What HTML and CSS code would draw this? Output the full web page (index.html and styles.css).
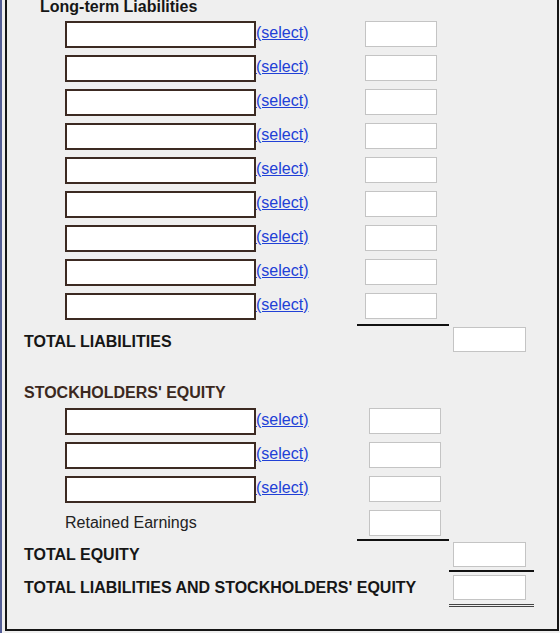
FILE: index.html
```html
<!DOCTYPE html>
<html>
<head>
    <title>Balance Sheet - Liabilities and Equity</title>
    <link rel="stylesheet" href="styles.css">
</head>
<body>
    <div class="sheet">
        <div class="sub-head">Long-term Liabilities</div>

        <div class="line-item">
            <input type="text" class="acct-name">
            <a href="#" class="pick">(select)</a>
            <div class="amt-cell"><input type="text" class="amt"></div>
        </div>
        <div class="line-item">
            <input type="text" class="acct-name">
            <a href="#" class="pick">(select)</a>
            <div class="amt-cell"><input type="text" class="amt"></div>
        </div>
        <div class="line-item">
            <input type="text" class="acct-name">
            <a href="#" class="pick">(select)</a>
            <div class="amt-cell"><input type="text" class="amt"></div>
        </div>
        <div class="line-item">
            <input type="text" class="acct-name">
            <a href="#" class="pick">(select)</a>
            <div class="amt-cell"><input type="text" class="amt"></div>
        </div>
        <div class="line-item">
            <input type="text" class="acct-name">
            <a href="#" class="pick">(select)</a>
            <div class="amt-cell"><input type="text" class="amt"></div>
        </div>
        <div class="line-item">
            <input type="text" class="acct-name">
            <a href="#" class="pick">(select)</a>
            <div class="amt-cell"><input type="text" class="amt"></div>
        </div>
        <div class="line-item">
            <input type="text" class="acct-name">
            <a href="#" class="pick">(select)</a>
            <div class="amt-cell"><input type="text" class="amt"></div>
        </div>
        <div class="line-item">
            <input type="text" class="acct-name">
            <a href="#" class="pick">(select)</a>
            <div class="amt-cell"><input type="text" class="amt"></div>
        </div>
        <div class="line-item closing">
            <input type="text" class="acct-name">
            <a href="#" class="pick">(select)</a>
            <div class="amt-cell"><input type="text" class="amt"></div>
        </div>

        <div class="total-row first-total">
            <div class="total-label">TOTAL LIABILITIES</div>
            <div class="tot-cell"><input type="text" class="tot"></div>
        </div>

        <div class="section-head">STOCKHOLDERS' EQUITY</div>

        <div class="line-item equity">
            <input type="text" class="acct-name">
            <a href="#" class="pick">(select)</a>
            <div class="amt-cell"><input type="text" class="amt"></div>
        </div>
        <div class="line-item equity">
            <input type="text" class="acct-name">
            <a href="#" class="pick">(select)</a>
            <div class="amt-cell"><input type="text" class="amt"></div>
        </div>
        <div class="line-item equity">
            <input type="text" class="acct-name">
            <a href="#" class="pick">(select)</a>
            <div class="amt-cell"><input type="text" class="amt"></div>
        </div>
        <div class="line-item equity closing retained">
            <div class="fixed-name">Retained Earnings</div>
            <div class="amt-cell"><input type="text" class="amt"></div>
        </div>

        <div class="total-row sub-total">
            <div class="total-label">TOTAL EQUITY</div>
            <div class="tot-cell"><input type="text" class="tot"></div>
        </div>
        <div class="total-row grand-total">
            <div class="total-label">TOTAL LIABILITIES AND STOCKHOLDERS' EQUITY</div>
            <div class="tot-cell"><input type="text" class="tot"></div>
        </div>
    </div>
</body>
</html>
```

FILE: styles.css
```css
body {
    margin: 0;
    background-color: #efefef;
    border-left: 2px solid #555f96;
    font-family: "Liberation Sans", Arial, sans-serif;
    font-size: 16px;
    color: #161616;
    min-height: 633px;
    box-sizing: border-box;
}

.sheet {
    width: 554px;
    margin: -20px 0 0 3px;
    padding: 16px 0 22px 0;
    border: 2px solid #151515;
    box-sizing: border-box;
    background-color: #efefef;
}

/* columns: indent | account name | select link | amounts | totals */
.line-item,
.total-row {
    display: grid;
    grid-template-columns: 58px 191px 101px 92px 85px 1fr;
    align-items: start;
}

.sub-head {
    font-weight: bold;
    line-height: 18px;
    padding-left: 33px;
    margin-bottom: 5px;
}

.section-head {
    font-weight: bold;
    line-height: 18px;
    color: #3b2820;
    padding-left: 17px;
    margin: 32px 0 6px 0;
}

.line-item {
    height: 34px;
}

.line-item.closing {
    height: auto;
}

.acct-name {
    grid-column: 2;
    display: block;
    width: 191px;
    height: 27px;
    margin: 0;
    padding: 0 4px;
    border: 2px solid #3c2a22;
    background: white;
    box-sizing: border-box;
    font-size: 14px;
}

.pick {
    grid-column: 3;
    color: #2140d6;
    text-decoration: underline;
    line-height: 18px;
    padding-top: 3px;
}

.amt-cell {
    grid-column: 4;
    padding-left: 8px;
}

.equity .amt-cell {
    padding-left: 12px;
}

.closing .amt-cell {
    border-bottom: 2px solid #111;
    padding-bottom: 5px;
}

.retained .amt-cell {
    padding-bottom: 3px;
}

.amt,
.tot {
    display: block;
    width: 72px;
    height: 26px;
    margin: 0;
    border: 1px solid #c4c4c4;
    background: white;
    box-sizing: border-box;
    font-size: 14px;
}

.tot {
    width: 73px;
    height: 25px;
}

.fixed-name {
    grid-column: 2;
    line-height: 26px;
    color: #222;
}

.total-label {
    grid-column: 1 / 5;
    padding: 7px 0 0 17px;
    line-height: 18px;
    font-weight: bold;
    white-space: nowrap;
}

.sub-total .total-label {
    padding-top: 5px;
}

.tot-cell {
    grid-column: 5;
    padding: 1px 0 0 4px;
}

.sub-total .tot-cell {
    padding-bottom: 3px;
    border-bottom: 2px solid #111;
}

.grand-total .tot-cell {
    padding-top: 3px;
    padding-bottom: 4px;
    border-bottom: 3px double #444;
}
```
